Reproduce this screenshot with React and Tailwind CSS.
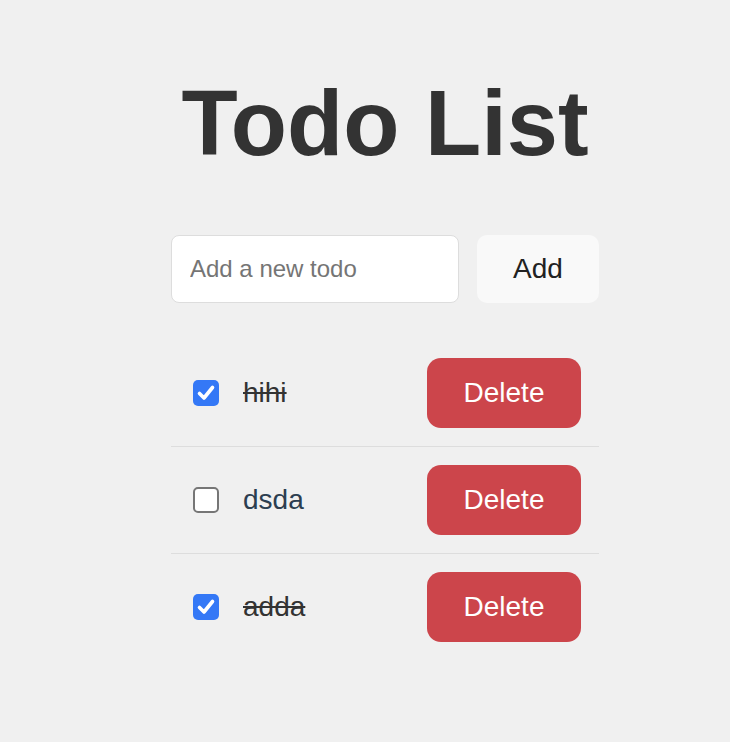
import React, { useState } from 'react';

const initialTodos = [
  { id: 1, text: 'hihi', done: true },
  { id: 2, text: 'dsda', done: false },
  { id: 3, text: 'adda', done: true },
];

const Checkbox = ({ checked, onChange }) => (
  <button
    type="button"
    onClick={onChange}
    className={`ml-[4px] flex h-[26px] w-[26px] shrink-0 items-center justify-center rounded-[5px] ${
      checked ? 'bg-[#3478f6]' : 'border-2 border-[#767676] bg-white'
    }`}
  >
    {checked && (
      <svg width="26" height="26" viewBox="0 0 26 26" fill="none">
        <path d="M6.5 13.5 L11 18 L19.5 7.5" stroke="white" strokeWidth="3.6" strokeLinecap="round" strokeLinejoin="round" />
      </svg>
    )}
  </button>
);

const App = () => {
  const [todos, setTodos] = useState(initialTodos);
  const [input, setInput] = useState('');

  const addTodo = () => {
    if (!input.trim()) return;
    setTodos([...todos, { id: Date.now(), text: input.trim(), done: false }]);
    setInput('');
  };

  const toggleTodo = (id) => {
    setTodos(todos.map(t => (t.id === id ? { ...t, done: !t.done } : t)));
  };

  const removeTodo = (id) => {
    setTodos(todos.filter(t => t.id !== id));
  };

  return (
    <div className="min-h-screen bg-[#f0f0f0] font-['Liberation_Sans',Arial,sans-serif]">
      <div className="ml-[171px] w-[428px] pt-[77px]">
        <h1 className="-mx-[20px] text-center text-[92px] font-bold leading-none text-[#333]">Todo List</h1>

        <div className="mt-[66px] flex gap-[18px]">
          <input
            type="text"
            value={input}
            onChange={e => setInput(e.target.value)}
            placeholder="Add a new todo"
            className="h-[68px] w-[288px] rounded-[8px] border border-[#ddd] bg-white px-[18px] text-[24px] text-[#333] outline-none placeholder:text-[#757575]"
          />
          <button
            onClick={addTodo}
            className="h-[68px] flex-1 rounded-[10px] bg-[#f9f9f9] text-[28px] text-[#222]"
          >
            Add
          </button>
        </div>

        <ul className="mt-[37px]">
          {todos.map((todo, index) => (
            <li
              key={todo.id}
              className={`flex items-center px-[18px] py-[18px] ${index < todos.length - 1 ? 'border-b border-[#ddd]' : ''}`}
            >
              <Checkbox checked={todo.done} onChange={() => toggleTodo(todo.id)} />
              <span
                className={`ml-[24px] flex-1 text-[28px] ${todo.done ? 'text-[#333] line-through' : 'text-[#2c3e50]'}`}
              >
                {todo.text}
              </span>
              <button
                onClick={() => removeTodo(todo.id)}
                className="h-[70px] w-[154px] rounded-[14px] bg-[#cc454b] text-[28px] text-white"
              >
                Delete
              </button>
            </li>
          ))}
        </ul>
      </div>
    </div>
  );
};

export default App;
